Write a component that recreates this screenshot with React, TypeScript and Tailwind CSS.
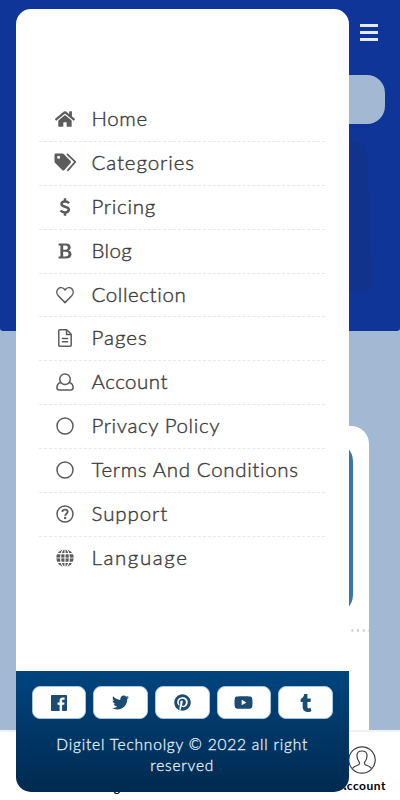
import React from 'react';
import {
  FaHome,
  FaTwitter,
  FaPinterest,
  FaYoutube,
  FaTumblr
} from 'react-icons/fa';

const TagsIcon = () => (
  <svg width="23" height="19" viewBox="0 0 23 19" fill="currentColor">
    <path
      fillRule="evenodd"
      d="M0.5 1.8Q0.5 0.5 1.8 0.5H8.3Q9.3 0.5 10 1.2L16.6 7.9Q17.6 9 16.6 10L10.4 17Q9.3 18.2 8.2 17L1.2 10Q0.5 9.3 0.5 8.3ZM3 4.2Q3 5.8 4.6 5.8T6.2 4.2Q6.2 2.7 4.6 2.7T3 4.2Z"
    />
    <path
      d="M13.4 1.4L21.3 8.9L13.8 17.4"
      fill="none"
      stroke="currentColor"
      strokeWidth="1.7"
      strokeLinejoin="round"
      strokeLinecap="round"
    />
  </svg>
);

const DollarIcon = () => (
  <svg width="12" height="18" viewBox="0 0 12 18" fill="none" stroke="currentColor" strokeWidth="2.5">
    <path d="M6 0.3V3.2M6 14.6V17.7" />
    <path d="M10 5.2C9 4 7.6 3.5 6 3.5C4 3.5 2.5 4.5 2.5 6.1C2.5 9.7 9.8 7.7 9.8 11.6C9.8 13.4 8.2 14.5 6 14.5C4.2 14.5 2.7 13.8 1.5 12.5" />
  </svg>
);

const BoldIcon = () => (
  <svg width="14" height="16" viewBox="0 0 14 16" fill="currentColor">
    <path
      fillRule="evenodd"
      d="M0.5 0.5H7.8C11 0.5 12.7 2 12.7 4.3C12.7 5.8 11.9 6.9 10.5 7.5C12.4 8 13.5 9.3 13.5 11.2C13.5 13.9 11.5 15.5 8 15.5H0.5V13.7L2.4 13.3V2.7L0.5 2.3ZM5.2 2.5V6.8H7.3C9 6.8 9.8 6 9.8 4.6S9 2.5 7.3 2.5ZM5.2 8.7V13.5H7.5C9.5 13.5 10.5 12.7 10.5 11.1S9.5 8.7 7.5 8.7Z"
    />
  </svg>
);

const HeartIcon = () => (
  <svg width="18" height="18" viewBox="0 0 18 18" fill="none" stroke="currentColor" strokeWidth="1.5" strokeLinejoin="round">
    <path d="M9 16.6L2.3 9.8C0.3 7.7 0.4 4.7 2 3C3.8 1.1 6.6 1.2 8.2 3.1L9 4L9.8 3.1C11.4 1.2 14.2 1.1 16 3C17.6 4.7 17.7 7.7 15.7 9.8Z" />
  </svg>
);

const FileIcon = () => (
  <svg width="14" height="18" viewBox="0 0 14 18" fill="none" stroke="currentColor" strokeWidth="1.5">
    <path d="M1.8 0.8H8.7L13.2 5.3V16.2Q13.2 17.2 12.2 17.2H1.8Q0.8 17.2 0.8 16.2V1.8Q0.8 0.8 1.8 0.8Z" />
    <path d="M8.5 1V5.5H13M3.8 9.4H10.2M3.8 12.7H10.2" />
  </svg>
);

const UserIcon = () => (
  <svg width="18" height="18" viewBox="0 0 18 18" fill="none" stroke="currentColor" strokeWidth="1.5">
    <circle cx="9" cy="6.3" r="5.3" />
    <path d="M4.8 9.6C2.2 10.2 0.9 12 0.9 14.8C0.9 16.2 1.7 17 3.1 17H14.9C16.3 17 17.1 16.2 17.1 14.8C17.1 12 15.8 10.2 13.2 9.6" />
  </svg>
);

const CircleIcon = () => (
  <svg width="18" height="18" viewBox="0 0 18 18" fill="none" stroke="currentColor" strokeWidth="1.5">
    <circle cx="9" cy="9" r="8" />
  </svg>
);

const HelpIcon = () => (
  <svg width="18" height="18" viewBox="0 0 18 18" fill="none" stroke="currentColor" strokeWidth="1.5">
    <circle cx="9" cy="9" r="8" />
    <path d="M6.3 6.8C6.5 5.3 7.5 4.6 9 4.6C10.6 4.6 11.7 5.5 11.7 6.8C11.7 8.6 9.1 8.7 9.1 10.8" strokeWidth="1.9" />
    <circle cx="9.1" cy="13" r="1.2" fill="currentColor" stroke="none" />
  </svg>
);

const GlobeIcon = () => (
  <svg width="18" height="18" viewBox="0 0 18 18">
    <circle cx="9" cy="9" r="8.7" fill="currentColor" />
    <g fill="none" stroke="#fff" strokeWidth="1.1">
      <ellipse cx="9" cy="9" rx="4.4" ry="9.2" />
      <path d="M9 0V18M1 4.6H17M1 13.4H17" />
      <path d="M0 9H18" strokeWidth="0.8" />
    </g>
  </svg>
);

const FacebookIcon = () => (
  <svg width="16" height="16" viewBox="0 0 16 16" fill="currentColor">
    <path d="M0.8 0H15.2Q16 0 16 0.8V15.2Q16 16 15.2 16H11.1V9.8H13.2L13.5 7.4H11.1V5.9C11.1 5.2 11.3 4.7 12.3 4.7H13.6V2.5C13.4 2.5 12.6 2.4 11.7 2.4C9.9 2.4 8.6 3.5 8.6 5.6V7.4H6.5V9.8H8.6V16H0.8Q0 16 0 15.2V0.8Q0 0 0.8 0Z" />
  </svg>
);

const menuItems = [
  { label: 'Home', icon: <FaHome size={20} />, tracking: 'tracking-[0.6px]' },
  { label: 'Categories', icon: <TagsIcon />, tracking: 'tracking-[0.9px]' },
  { label: 'Pricing', icon: <DollarIcon />, tracking: 'tracking-[0.7px]' },
  { label: 'Blog', icon: <BoldIcon />, tracking: 'tracking-[0.4px]' },
  { label: 'Collection', icon: <HeartIcon />, tracking: 'tracking-[0.6px]' },
  { label: 'Pages', icon: <FileIcon />, tracking: 'tracking-[1px]' },
  { label: 'Account', icon: <UserIcon />, tracking: 'tracking-[0.5px]' },
  { label: 'Privacy Policy', icon: <CircleIcon />, tracking: 'tracking-[0.6px]' },
  { label: 'Terms And Conditions', icon: <CircleIcon />, tracking: 'tracking-[0.65px]' },
  { label: 'Support', icon: <HelpIcon />, tracking: 'tracking-[0.9px]' },
  { label: 'Language', icon: <GlobeIcon />, tracking: 'tracking-[1.6px]' }
];

const socialLinks = [
  { name: 'Facebook', icon: <FacebookIcon /> },
  { name: 'Twitter', icon: <FaTwitter size={17} /> },
  { name: 'Pinterest', icon: <FaPinterest size={17} /> },
  { name: 'YouTube', icon: <FaYoutube size={19} /> },
  { name: 'Tumblr', icon: <FaTumblr size={18} /> }
];

const PageContent: React.FC = () => (
  <div className="flex h-[800px] flex-col">
    <header className="h-[331px] rounded-b-[3px] bg-[#103599]">
      <div className="flex h-[75px] justify-end pt-6 pr-[22px]">
        <div className="flex h-[17px] w-[18px] flex-col justify-between">
          <span className="h-[3px] bg-[#e4eafa]" />
          <span className="h-[3px] bg-[#e4eafa]" />
          <span className="h-[3px] bg-[#e4eafa]" />
        </div>
      </div>
      <div className="mr-[15px] ml-[18px] h-[49px] rounded-[18px] bg-[#a2b8d3]" />
      <div className="mt-[18px] mr-[28px] ml-[30px] h-[149px]">
        <svg className="h-full w-full" viewBox="0 0 341 149" preserveAspectRatio="none">
          <path d="M0 0H325Q335 0 336 12L341 140Q341 149 332 149H0Z" fill="#11338b" />
        </svg>
      </div>
    </header>
    <main className="flex-1 pt-[95px] pr-[31px] pl-[31px]">
      <div className="h-full rounded-t-[18px] bg-white pt-[17px]">
        <div className="mx-4 h-[170px] rounded-[18px] bg-[#3878a6]" />
        <div className="mt-[16px] h-[3px] bg-[radial-gradient(circle,#cfcfcf_1px,transparent_1.5px)] bg-[length:5.7px_3px]" />
      </div>
    </main>
    <nav className="flex h-[70px] justify-between border-t-2 border-[#f1f1f1] bg-white pr-[13px] pl-[89px] text-[12px] leading-4 font-bold text-black">
      <span className="pt-[48px]">Categories</span>
      <div className="flex w-[50px] flex-col items-center pt-[14px]">
        <svg className="shrink-0" width="28" height="28" viewBox="0 0 28 28" fill="none" stroke="#3f3f3f" strokeWidth="1.2">
          <circle cx="14" cy="14" r="13.2" />
          <path d="M4.5 22.5C5.5 20.7 8 19.8 10.2 19C11.7 18.4 11.8 17 11.2 16C9.3 13.3 8.8 11 9 8.8C9.4 6.2 11.4 5 14 5S18.6 6.2 19 8.8C19.2 11 18.7 13.3 16.8 16C16.2 17 16.3 18.4 17.8 19C20 19.8 22.5 20.7 23.5 22.5" />
        </svg>
        <span className="mt-[4px] tracking-[0.5px]">Account</span>
      </div>
    </nav>
  </div>
);

const SideMenu: React.FC = () => (
  <aside className="absolute top-[9px] left-[15.5px] flex h-[783px] w-[333.5px] flex-col overflow-hidden rounded-[15px] bg-white">
    <ul className="flex-1 pt-[89px] pr-6 pl-[23px]">
      {menuItems.map((item) => (
        <li
          key={item.label}
          className="flex h-[43.9px] items-center border-b border-dashed border-[#e8e8e8] text-[#3c3c3c] last:border-b-0"
        >
          <span className="flex w-[53px] justify-center pb-px text-[#5c5c5c]">{item.icon}</span>
          <span className={`whitespace-nowrap pb-[3px] text-[20.5px] leading-6 font-light [-webkit-text-stroke:0.4px_#3c3c3c] ${item.tracking}`}>
            {item.label}
          </span>
        </li>
      ))}
    </ul>
    <footer className="h-[121px] bg-linear-to-b from-[#00457f] to-[#002a50] px-4 pt-[15px]">
      <div className="grid h-[33px] grid-cols-5 gap-[7px]">
        {socialLinks.map((link) => (
          <a
            key={link.name}
            className="flex items-center justify-center rounded-[8px] border border-[#a9c7e2] bg-white text-[#1c4c74]"
          >
            {link.icon}
          </a>
        ))}
      </div>
      <p className="mt-[15px] text-center text-[15.5px] leading-[21px] font-light tracking-[0.8px] text-[#e2effb] [-webkit-text-stroke:0.3px_#e2effb]">
        Digitel Technolgy © 2022 all right
        <br />
        reserved
      </p>
    </footer>
  </aside>
);

const App: React.FC = () => {
  return (
    <div className="relative h-[800px] w-[400px] overflow-hidden bg-[#a2b8d3] font-['Lato',sans-serif]">
      <PageContent />
      <SideMenu />
    </div>
  );
};

export default App;
